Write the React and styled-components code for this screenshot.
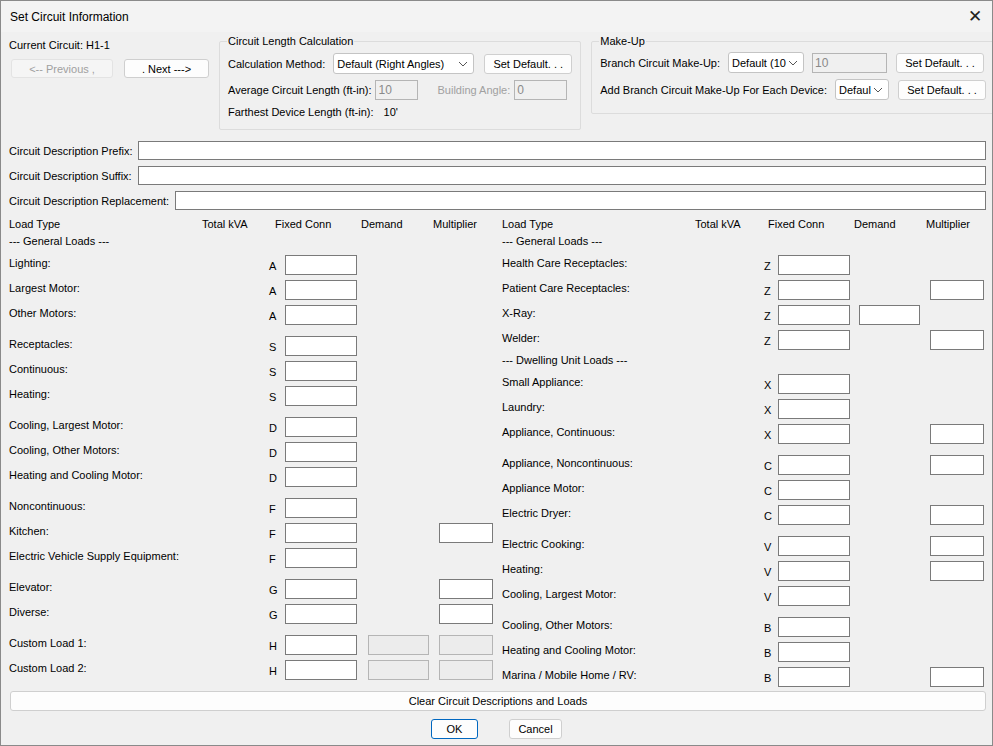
import React from "react";
import styled, { createGlobalStyle } from "styled-components";

const Global = createGlobalStyle`
  body { margin: 0; font-family: "Liberation Sans", Arial, sans-serif; font-size: 11px; color: #000; }
  * { box-sizing: border-box; }
`;

const Window = styled.div`
  width: 993px;
  height: 746px;
  background: #f0f0f0;
  border: 1px solid #8a8a8a;
  display: flex;
  flex-direction: column;
  overflow: hidden;
`;

const TitleBar = styled.div`
  height: 31px;
  flex: none;
  display: flex;
  align-items: center;
  justify-content: space-between;
  padding: 0 10px 0 9px;
  font-size: 12px;
  background: #f3f3f3;
`;

const Close = styled.span`
  font-size: 17px;
  font-weight: 300;
  color: #222;
`;

const Top = styled.div`
  display: flex;
  padding: 3px 0 0 8px;
  height: 106px;
  flex: none;
`;

const NavBlock = styled.div`
  width: 210px;
  flex: none;
  display: flex;
  flex-direction: column;
  gap: 8px;
  padding-top: 4px;
`;

const NavRow = styled.div`
  display: flex;
  gap: 11px;
  padding-left: 2px;
`;

const Btn = styled.button`
  font: inherit;
  font-size: 11px;
  height: ${(p) => p.$h || 20}px;
  width: ${(p) => p.$w}px;
  background: ${(p) => (p.$disabled ? "#f5f5f5" : "#fdfdfd")};
  color: ${(p) => (p.$disabled ? "#a0a0a0" : "#000")};
  border: 1px solid ${(p) => (p.$primary ? "#0067c0" : p.$disabled ? "#e3e3e3" : "#cfcfcf")};
  border-radius: 3px;
  padding: 0;
  flex: none;
`;

const Group = styled.fieldset`
  width: ${(p) => p.$w}px;
  height: ${(p) => p.$h}px;
  flex: none;
  margin: 0 10px 0 0;
  padding: 2px 8px 0 8px;
  border: 1px solid #dcdcdc;
  border-radius: 2px;
  display: flex;
  flex-direction: column;
  gap: ${(p) => p.$gap || 6}px;
  legend { padding: 0 1px; margin-left: -1px; font-size: 11px; }
`;

const Row = styled.div`
  display: flex;
  align-items: center;
  gap: ${(p) => p.$gap || 8}px;
`;

const Label = styled.span`
  color: ${(p) => (p.$muted ? "#a0a0a0" : "#000")};
  white-space: nowrap;
`;

const Field = styled.div`
  width: ${(p) => p.$w}px;
  height: 20px;
  flex: none;
  border: 1px solid ${(p) => (p.$disabled ? "#b5b5b5" : "#7a7a7a")};
  background: ${(p) => (p.$disabled ? "#f0f0f0" : "#fff")};
  color: #8a8a8a;
  padding: 2px 2px;
  font-size: 12px;
  line-height: 14px;
`;

const Combo = styled.div`
  width: ${(p) => p.$w}px;
  height: 21px;
  flex: none;
  border: 1px solid #c4c4c4;
  border-radius: 3px;
  background: #fff;
  display: flex;
  align-items: center;
  justify-content: space-between;
  padding: 0 5px 0 3px;
  overflow: hidden;
  white-space: nowrap;
  svg { flex: none; }
`;

const Chevron = () => (
  <svg width="10" height="6" viewBox="0 0 10 6">
    <path d="M1 1l4 4 4-4" fill="none" stroke="#555" strokeWidth="1" />
  </svg>
);

const DescRow = styled.div`
  display: flex;
  align-items: center;
  gap: 6px;
  padding: 0 6px 0 8px;
  height: 25px;
  flex: none;
`;

const DescInput = styled.div`
  flex: 1;
  height: 19px;
  border: 1px solid #7a7a7a;
  background: #fff;
`;

const Columns = styled.div`
  display: grid;
  grid-template-columns: 493px 490px;
  padding-left: 8px;
  height: 476px;
  flex: none;
`;

const Col = styled.div`
  display: flex;
  flex-direction: column;
`;

const HeadRow = styled.div`
  display: grid;
  grid-template-columns: 193px 73px 86px 72px 1fr;
  height: 17px;
  align-items: end;
  margin-bottom: 2px;
`;

const Section = styled.div`
  height: 19px;
  line-height: 19px;
`;

const LoadRow = styled.div`
  display: grid;
  grid-template-columns: ${(p) => p.$label}px ${(p) => p.$letter}px 72px ${(p) => p.$g1}px 61px ${(p) => p.$g2}px 54px;
  height: 25px;
  align-items: center;
  margin-top: ${(p) => (p.$gap ? 6 : 0)}px;
`;

const RowLabel = styled.span`
  white-space: nowrap;
  padding-bottom: 1px;
`;

const Letter = styled.span`
  padding-top: 5px;
`;

const Box = styled.div`
  height: 20px;
  border: 1px solid ${(p) => (p.$disabled ? "#b5b5b5" : "#7a7a7a")};
  background: ${(p) => (p.$disabled ? "#ececec" : "#fff")};
  margin-top: 2px;
`;

const Footer = styled.div`
  display: flex;
  flex-direction: column;
  align-items: center;
  gap: 8px;
  padding: 2px 6px 0 9px;
`;

const WideBtn = styled(Btn)`
  width: 100%;
`;

const Actions = styled.div`
  display: flex;
  gap: 31px;
  padding-right: 3px;
`;

const left = [
  { l: "Lighting:", k: "A" },
  { l: "Largest Motor:", k: "A" },
  { l: "Other Motors:", k: "A" },
  { l: "Receptacles:", k: "S", gap: 1 },
  { l: "Continuous:", k: "S" },
  { l: "Heating:", k: "S" },
  { l: "Cooling, Largest Motor:", k: "D", gap: 1 },
  { l: "Cooling, Other Motors:", k: "D" },
  { l: "Heating and Cooling Motor:", k: "D" },
  { l: "Noncontinuous:", k: "F", gap: 1 },
  { l: "Kitchen:", k: "F", m: 1 },
  { l: "Electric Vehicle Supply Equipment:", k: "F" },
  { l: "Elevator:", k: "G", gap: 1, m: 1 },
  { l: "Diverse:", k: "G", m: 1 },
  { l: "Custom Load 1:", k: "H", gap: 1, d: 2, m: 2 },
  { l: "Custom Load 2:", k: "H", d: 2, m: 2 },
];

const right = [
  { l: "Health Care Receptacles:", k: "Z" },
  { l: "Patient Care Receptacles:", k: "Z", m: 1 },
  { l: "X-Ray:", k: "Z", d: 1 },
  { l: "Welder:", k: "Z", m: 1 },
  { section: "--- Dwelling Unit Loads ---" },
  { l: "Small Appliance:", k: "X" },
  { l: "Laundry:", k: "X" },
  { l: "Appliance, Continuous:", k: "X", m: 1 },
  { l: "Appliance, Noncontinuous:", k: "C", gap: 1, m: 1 },
  { l: "Appliance Motor:", k: "C" },
  { l: "Electric Dryer:", k: "C", m: 1 },
  { l: "Electric Cooking:", k: "V", gap: 1, m: 1 },
  { l: "Heating:", k: "V", m: 1 },
  { l: "Cooling, Largest Motor:", k: "V" },
  { l: "Cooling, Other Motors:", k: "B", gap: 1 },
  { l: "Heating and Cooling Motor:", k: "B" },
  { l: "Marina / Mobile Home / RV:", k: "B", m: 1 },
];

const slot = (v) => (v ? <Box $disabled={v === 2} /> : <span />);

const LoadColumn = ({ rows, dims }) => (
  <Col>
    <HeadRow>
      <span>Load Type</span>
      <span>Total kVA</span>
      <span>Fixed Conn</span>
      <span>Demand</span>
      <span>Multiplier</span>
    </HeadRow>
    <Section>--- General Loads ---</Section>
    {rows.map((r, i) =>
      r.section ? (
        <Section key={i}>{r.section}</Section>
      ) : (
        <LoadRow key={i} $gap={r.gap} {...dims}>
          <RowLabel>{r.l}</RowLabel>
          <Letter>{r.k}</Letter>
          <Box />
          <span />
          {slot(r.d)}
          <span />
          {slot(r.m)}
        </LoadRow>
      )
    )}
  </Col>
);

export default function App() {
  return (
    <>
      <Global />
      <Window>
        <TitleBar>
          <span>Set Circuit Information</span>
          <Close>✕</Close>
        </TitleBar>
        <Top>
          <NavBlock>
            <span>Current Circuit: H1-1</span>
            <NavRow>
              <Btn $w={102} $h={19} $disabled>&lt;-- Previous ,</Btn>
              <Btn $w={85} $h={19}>. Next ---&gt;</Btn>
            </NavRow>
          </NavBlock>
          <Group $w={360} $h={95}>
            <legend>Circuit Length Calculation</legend>
            <Row $gap={8} style={{ marginTop: 4 }}>
              <Label>Calculation Method:</Label>
              <Combo $w={141}>Default (Right Angles)<Chevron /></Combo>
              <Btn $w={88} style={{ marginLeft: 2 }}>Set Default. . .</Btn>
            </Row>
            <Row $gap={4}>
              <Label>Average Circuit Length (ft-in):</Label>
              <Field $w={43} $disabled>10</Field>
              <Label $muted style={{ marginLeft: 15 }}>Building Angle:</Label>
              <Field $w={53} $disabled>0</Field>
            </Row>
            <Row $gap={10}>
              <Label>Farthest Device Length (ft-in):</Label>
              <Label>10'</Label>
            </Row>
          </Group>
          <Group $w={398} $h={79}>
            <legend>Make-Up</legend>
            <Row $gap={8} style={{ marginTop: 3 }}>
              <Label>Branch Circuit Make-Up:</Label>
              <Combo $w={76}>Default (10<Chevron /></Combo>
              <Field $w={75} $disabled>10</Field>
              <Btn $w={88} style={{ marginLeft: 1 }}>Set Default. . .</Btn>
            </Row>
            <Row $gap={8}>
              <Label>Add Branch Circuit Make-Up For Each Device:</Label>
              <Combo $w={54}>Defaul<Chevron /></Combo>
              <Btn $w={88} style={{ marginLeft: 1 }}>Set Default. . .</Btn>
            </Row>
          </Group>
        </Top>
        <DescRow>
          <span>Circuit Description Prefix:</span>
          <DescInput />
        </DescRow>
        <DescRow>
          <span>Circuit Description Suffix:</span>
          <DescInput />
        </DescRow>
        <DescRow>
          <span>Circuit Description Replacement:</span>
          <DescInput />
        </DescRow>
        <Columns>
          <LoadColumn rows={left} dims={{ $label: 260, $letter: 16, $g1: 11, $g2: 10 }} />
          <LoadColumn rows={right} dims={{ $label: 262, $letter: 14, $g1: 9, $g2: 10 }} />
        </Columns>
        <Footer>
          <WideBtn $h={20}>Clear Circuit Descriptions and Loads</WideBtn>
          <Actions>
            <Btn $w={47} $primary>OK</Btn>
            <Btn $w={53}>Cancel</Btn>
          </Actions>
        </Footer>
      </Window>
    </>
  );
}
